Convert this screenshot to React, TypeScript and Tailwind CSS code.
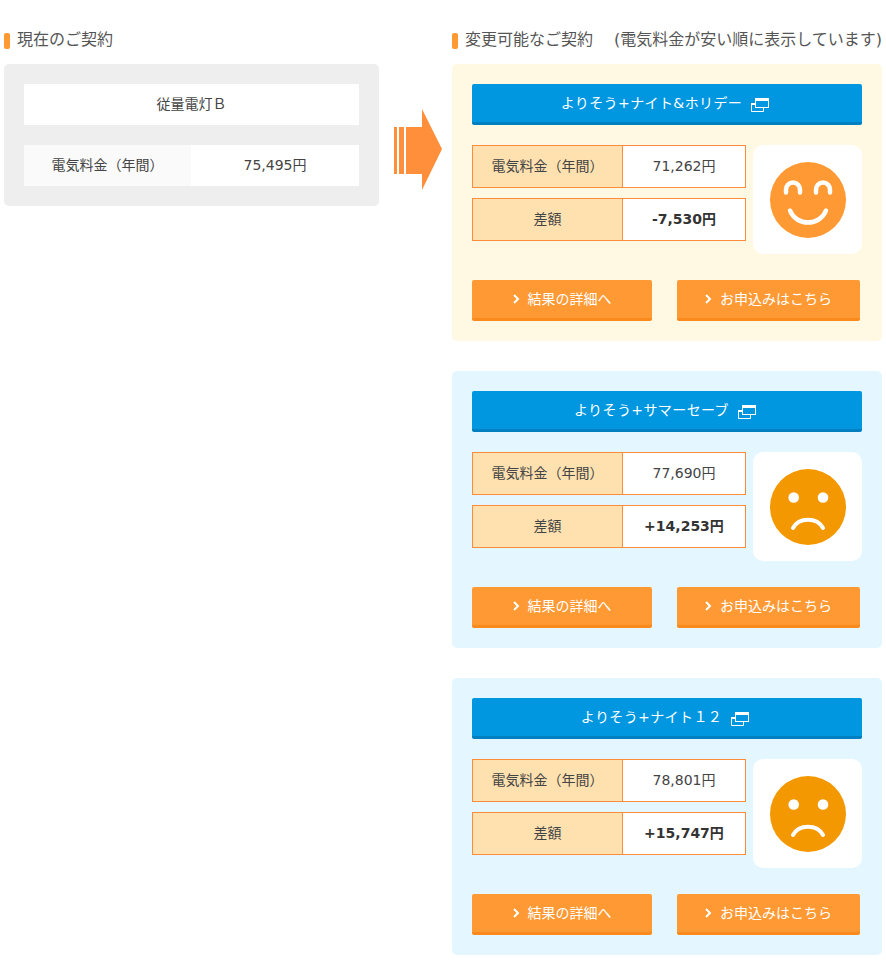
const plans = [
  { name: 'よりそう+ナイト&ホリデー', fee: '71,262円', diff: '-7,530円', good: true },
  { name: 'よりそう+サマーセーブ', fee: '77,690円', diff: '+14,253円', good: false },
  { name: 'よりそう+ナイト１２', fee: '78,801円', diff: '+15,747円', good: false },
];

const fontStack = "font-['DejaVu_Sans','Noto_Sans_CJK_JP',sans-serif]";

const Heading = ({ children }: { children: React.ReactNode }) => (
  <h2 className="flex h-[16px] items-center gap-[7px] whitespace-pre text-[16px] text-[#555]">
    <span className="h-[16px] w-[6px] rounded-[2px] bg-[#ff9933]" />
    <span className="-translate-y-px">{children}</span>
  </h2>
);

const WindowIcon = () => (
  <svg className="mt-[4px]" width="18" height="14" viewBox="0 0 18 14" fill="none" stroke="#fff" strokeWidth="1">
    <rect x="4.5" y="0.5" width="13" height="9" />
    <path d="M4 1.500h14" strokeWidth="3" />
    <path d="M4 6h-3.500v7.500h12v-3.500" />
    <path d="M0 6h4" strokeWidth="2" />
  </svg>
);

const Face = ({ good }: { good: boolean }) =>
  good ? (
    <svg width="76" height="76" viewBox="0 0 76 76">
      <circle cx="38" cy="38" r="38" fill="#ff9933" />
      <g fill="none" stroke="#fff" strokeWidth="4.500" strokeLinecap="round">
        <path d="M16 30.500v-3a7 7 0 0 1 14 0v3" />
        <path d="M46 30.500v-3a7 7 0 0 1 14 0v3" />
        <path d="M20 48.500c6 16 30 16 36 0" />
      </g>
    </svg>
  ) : (
    <svg width="76" height="76" viewBox="0 0 76 76">
      <circle cx="38" cy="38" r="38" fill="#f39800" />
      <circle cx="23.700" cy="28.500" r="5.300" fill="#fff" />
      <circle cx="53" cy="28.500" r="5.300" fill="#fff" />
      <path d="M23 59c6-11 24-11 30 0" fill="none" stroke="#fff" strokeWidth="4" strokeLinecap="round" />
    </svg>
  );

const Chevron = () => (
  <svg width="7" height="10" viewBox="0 0 7 10" fill="none" stroke="#fff" strokeWidth="2">
    <path d="M1 1l4 4-4 4" />
  </svg>
);

const Row = ({ label, value, bold }: { label: string; value: string; bold?: boolean }) => (
  <div className="flex h-[43px] w-[274px] border border-[#ff8c3a] bg-white text-[14px] text-[#444]">
    <div className="flex w-[150px] items-center justify-center border-r border-[#ff8c3a] bg-[#ffe1b0]">{label}</div>
    <div className={`flex flex-1 items-center justify-center ${bold ? 'font-bold text-[#333]' : ''}`}>{value}</div>
  </div>
);

const ActionButton = ({ label, className }: { label: string; className: string }) => (
  <a className={`flex h-[41px] items-center justify-center gap-[8px] rounded-[2px] border-b-[3px] border-[#fb8a1c] bg-[#ff9933] text-[14px] text-white ${className}`}>
    <Chevron />
    {label}
  </a>
);

const PlanCard = ({ plan }: { plan: (typeof plans)[0] }) => (
  <div className={`h-[277px] rounded-[5px] p-[20px] ${plan.good ? 'bg-[#fff8e3]' : 'bg-[#e4f6ff]'}`}>
    <a className="flex h-[41px] items-center justify-center gap-[9px] rounded-[2px] border-b-[3px] border-[#0080c0] bg-[#0097e0] pr-[4px] text-[14px] text-white">
      <span className="tracking-[0.4px]">{plan.name}</span>
      <WindowIcon />
    </a>
    <div className="mt-[20px] flex gap-[7px]">
      <div className="flex flex-col gap-[10px]">
        <Row label="電気料金（年間）" value={plan.fee} />
        <Row label="差額" value={plan.diff} bold />
      </div>
      <div className="flex h-[109px] w-[109px] items-center justify-center rounded-[10px] bg-white">
        <Face good={plan.good} />
      </div>
    </div>
    <div className="mt-[26px] flex gap-[25px]">
      <ActionButton label="結果の詳細へ" className="w-[180px]" />
      <ActionButton label="お申込みはこちら" className="w-[183px]" />
    </div>
  </div>
);

export default function App() {
  return (
    <div className={`flex h-[976px] w-[886px] bg-white pl-[4px] pt-[33px] ${fontStack}`}>
      {/* Current contract */}
      <div className="w-[375px]">
        <Heading>現在のご契約</Heading>
        <div className="mt-[15px] flex flex-col gap-[20px] rounded-[5px] bg-[#eeeeee] p-[20px] text-[14px] text-[#444]">
          <div className="flex h-[41px] items-center justify-center bg-white">従量電灯Ｂ</div>
          <div className="flex h-[41px]">
            <div className="flex w-[167px] items-center justify-center bg-[#fafafa]">電気料金（年間）</div>
            <div className="flex flex-1 items-center justify-center bg-white">75,495円</div>
          </div>
        </div>
      </div>

      {/* Arrow */}
      <div className="ml-[15px] mr-[10px] mt-[76px] w-[48px]">
        <svg width="48" height="81" viewBox="0 0 48 81" fill="#ff8f3a">
          <rect x="0" y="18" width="3" height="47" />
          <rect x="5" y="18" width="5" height="47" />
          <path d="M12 18h16V0l20 40-20 41V65H12z" />
        </svg>
      </div>

      {/* Available contracts */}
      <div className="w-[430px]">
        <Heading>変更可能なご契約　 (電気料金が安い順に表示しています)</Heading>
        <div className="mt-[15px] flex flex-col gap-[30px]">
          {plans.map((plan) => (
            <PlanCard key={plan.name} plan={plan} />
          ))}
        </div>
      </div>
    </div>
  );
}
